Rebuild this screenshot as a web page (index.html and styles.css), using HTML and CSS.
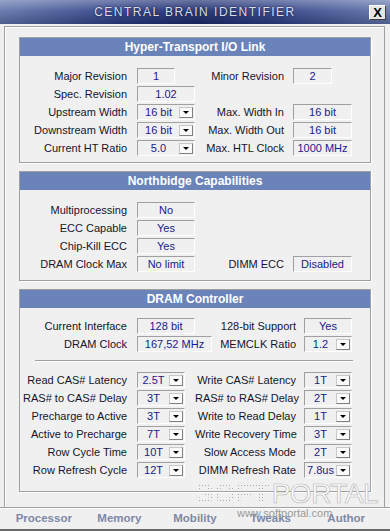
FILE: index.html
```html
<!DOCTYPE html>
<html lang="en">
<head>
    <meta charset="UTF-8">
    <meta name="viewport" content="width=device-width, initial-scale=1.0">
    <title>Central Brain Identifier - Memory</title>
    <link rel="stylesheet" href="styles.css">
</head>
<body>
    <div class="window">
        <div class="titlebar">
            <span></span>
            <span class="title">CENTRAL BRAIN IDENTIFIER</span>
            <span class="close">X</span>
        </div>

        <div class="client">
            <!-- Hyper-Transport -->
            <section class="panel panel-ht">
                <h2>Hyper-Transport I/O Link</h2>
                <div class="grid">
                    <span class="lab">Major Revision</span>
                    <span class="val w38">1</span>
                    <span class="lab">Minor Revision</span>
                    <span class="val w39">2</span>

                    <span class="lab">Spec. Revision</span>
                    <span class="val">1.02</span>
                    <span></span>
                    <span></span>

                    <span class="lab">Upstream Width</span>
                    <span class="val combo"><span class="txt">16 bit</span><span class="arrow"></span></span>
                    <span class="lab">Max. Width In</span>
                    <span class="val w59">16 bit</span>

                    <span class="lab">Downstream Width</span>
                    <span class="val combo"><span class="txt">16 bit</span><span class="arrow"></span></span>
                    <span class="lab">Max. Width Out</span>
                    <span class="val w59">16 bit</span>

                    <span class="lab">Current HT Ratio</span>
                    <span class="val combo"><span class="txt">5.0</span><span class="arrow"></span></span>
                    <span class="lab">Max. HTL Clock</span>
                    <span class="val w59">1000 MHz</span>
                </div>
            </section>

            <!-- Northbridge -->
            <section class="panel panel-nb">
                <h2>Northbidge Capabilities</h2>
                <div class="grid">
                    <span class="lab">Multiprocessing</span>
                    <span class="val">No</span>
                    <span></span>
                    <span></span>

                    <span class="lab">ECC Capable</span>
                    <span class="val">Yes</span>
                    <span></span>
                    <span></span>

                    <span class="lab">Chip-Kill ECC</span>
                    <span class="val">Yes</span>
                    <span></span>
                    <span></span>

                    <span class="lab">DRAM Clock Max</span>
                    <span class="val">No limit</span>
                    <span class="lab">DIMM ECC</span>
                    <span class="val w59">Disabled</span>
                </div>
            </section>

            <!-- DRAM -->
            <section class="panel panel-dram">
                <h2>DRAM Controller</h2>
                <div class="grid grid-dram">
                    <span class="lab">Current Interface</span>
                    <span class="val">128 bit</span>
                    <span class="lab">128-bit Support</span>
                    <span class="val w48">Yes</span>

                    <span class="lab">DRAM Clock</span>
                    <span class="val w75">167,52 MHz</span>
                    <span class="lab">MEMCLK Ratio</span>
                    <span class="val combo w48"><span class="txt">1.2</span><span class="arrow"></span></span>
                </div>

                <div class="sep"></div>

                <div class="grid grid-dram" id="timings"></div>
            </section>
        </div>

        <div class="tabs">
            <span class="tab">Processor</span>
            <span class="tab">Memory</span>
            <span class="tab">Mobility</span>
            <span class="tab">Tweaks</span>
            <span class="tab">Author</span>
        </div>

        <div class="watermark">
            <span class="wm-soft">SOFT</span><span class="wm-portal">PORTAL</span>
        </div>
        <div class="wm-url">www.softportal.com</div>
    </div>

    <script>
        // Timings: [left label, left value, right label, right value]
        const timings = [
            ['Read CAS# Latency', '2.5T', 'Write CAS# Latency', '1T'],
            ['RAS# to CAS# Delay', '3T', 'RAS# to RAS# Delay', '2T'],
            ['Precharge to Active', '3T', 'Write to Read Delay', '1T'],
            ['Active to Precharge', '7T', 'Write Recovery Time', '3T'],
            ['Row Cycle Time', '10T', 'Slow Access Mode', '2T'],
            ['Row Refresh Cycle', '12T', 'DIMM Refresh Rate', '7.8us']
        ];

        function combo(valor) {
            return `<span class="val combo w48"><span class="txt">${valor}</span><span class="arrow"></span></span>`;
        }

        const grid = document.getElementById('timings');
        grid.innerHTML = timings.map(t => `
            <span class="lab">${t[0]}</span>
            ${combo(t[1])}
            <span class="lab">${t[2]}</span>
            ${combo(t[3])}
        `).join('');
    </script>
</body>
</html>
```

FILE: styles.css
```css
* {
    margin: 0;
    padding: 0;
    box-sizing: border-box;
}

body {
    font-family: 'Liberation Sans', Arial, sans-serif;
    font-size: 11px;
    background: #f0f0f0;
    overflow: hidden;
}

.window {
    position: relative;
    width: 390px;
    height: 531px;
    background: #f0f0f0;
    border-bottom: 2px solid #6a6a6a;
    overflow: hidden;
}

/* Title bar */
.titlebar {
    height: 24px;
    display: grid;
    grid-template-columns: 1fr auto 1fr;
    align-items: center;
    background:
        linear-gradient(180deg, rgba(255,255,255,0.35) 0%, rgba(255,255,255,0.08) 45%, rgba(0,0,0,0.18) 100%),
        linear-gradient(90deg, #6073ab 0%, #2c3e84 30%, #1b2a6c 50%, #2c3e84 70%, #6073ab 100%);
}

.title {
    font-size: 12px;
    letter-spacing: 1.5px;
    color: #d9dde8;
    text-shadow: 0 0 2px #0b1440;
}

.close {
    justify-self: end;
    margin-right: 4px;
    width: 17px;
    height: 15px;
    background: #e6e6e6;
    border: 1px solid;
    border-color: #fff #404040 #404040 #fff;
    font-size: 13px;
    font-weight: bold;
    line-height: 13px;
    text-align: center;
    color: #000;
}

/* Main area */
.client {
    margin: 2px 5px 0 4px;
    border: 1px solid #a0a0a0;
    border-bottom: none;
    box-shadow: inset 1px 1px 0 #fff;
    padding: 10px 13px 15px 14px;
}

.panel {
    border: 1px solid #a0a0a0;
    box-shadow: 1px 1px 0 #fff;
}

.panel + .panel {
    margin-top: 8px;
}

.panel h2 {
    height: 18px;
    line-height: 18px;
    background: #6a83b9;
    color: #fff;
    font-size: 12px;
    font-weight: bold;
    text-align: center;
}

.panel-ht .grid {
    padding: 12px 0 6px;
}

.panel-nb .grid {
    padding: 12px 0 8px;
}

.panel-dram {
    padding-bottom: 13px;
}

.panel-dram .grid:first-of-type {
    padding-top: 10px;
}

.grid {
    display: grid;
    grid-template-columns: 117px 68px 88px 1fr;
    grid-auto-rows: 16px;
    row-gap: 2px;
    align-items: center;
}

.grid-dram {
    grid-template-columns: 117px 58px 109px 1fr;
}

.lab {
    text-align: right;
    padding-right: 10px;
    color: #14142a;
    white-space: nowrap;
}

.grid .lab:nth-child(4n+3) {
    padding-right: 9px;
}

.grid-dram .lab:nth-child(4n+3) {
    padding-right: 8px;
}

.val {
    width: 58px;
    height: 16px;
    line-height: 14px;
    border: 1px solid;
    border-color: #a0a0a0 #fff #fff #a0a0a0;
    color: #1a1a8a;
    text-align: center;
    white-space: nowrap;
}

.w38 { width: 38px; }
.w39 { width: 39px; }
.w48 { width: 48px; }
.w59 { width: 59px; }
.w75 { width: 75px; }

.combo {
    display: flex;
    align-items: center;
}

.combo .txt {
    flex: 1;
    text-align: center;
}

.arrow {
    position: relative;
    width: 14px;
    height: 11px;
    margin-right: 1px;
    background: #fafafa;
    border: 1px solid;
    border-color: #c8c8c8 #808080 #808080 #c8c8c8;
}

.arrow::after {
    content: "";
    position: absolute;
    left: 3px;
    top: 3px;
    border-left: 3px solid transparent;
    border-right: 3px solid transparent;
    border-top: 3px solid #000;
}

.sep {
    margin: 8px 17px 10px 15px;
    border-top: 1px solid #a0a0a0;
    border-bottom: 1px solid #fff;
}

/* Bottom tabs */
.tabs {
    display: flex;
    padding: 0 6px;
    height: 22px;
    border-top: 1px solid #a0a0a0;
    box-shadow: inset 0 1px 0 #fff;
}

.tab {
    flex: 1;
    text-align: center;
    line-height: 21px;
    font-size: 11.5px;
    font-weight: bold;
    color: #7e88a6;
}

/* Watermark over the window */
.watermark {
    position: absolute;
    left: 195px;
    top: 480px;
    font-size: 28px;
    line-height: 28px;
    white-space: nowrap;
}

.wm-soft {
    font-weight: bold;
    color: transparent;
    background: radial-gradient(circle, #a8a8a8 0.6px, transparent 0.8px) 0 0 / 3px 3px;
    -webkit-background-clip: text;
    background-clip: text;
}

.wm-portal {
    margin-left: 2px;
    color: #fdfdfd;
    -webkit-text-stroke: 0.6px #b0b0b0;
    letter-spacing: -0.5px;
}

.wm-url {
    position: absolute;
    left: 237px;
    top: 507px;
    font-size: 11px;
    color: #9a9a9a;
}
```
